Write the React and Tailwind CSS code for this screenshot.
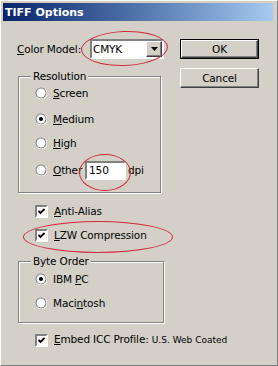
import React from 'react';

const raised =
  'border border-t-white border-l-white border-r-[#404040] border-b-[#404040] shadow-[inset_-1px_-1px_0_#808080]';
const sunken =
  'border-2 border-t-[#808080] border-l-[#808080] border-r-white border-b-white';

const Radio = ({ checked }) => (
  <svg width="12" height="12" viewBox="0 0 12 12" className="shrink-0">
    <circle cx="6" cy="6" r="5.5" fill="#808080" />
    <path d="M10.5 2.5 A5.5 5.5 0 0 1 2.5 10.5" fill="none" stroke="#ffffff" strokeWidth="1" />
    <circle cx="6" cy="6" r="4.5" fill="#ffffff" />
    {checked && <circle cx="6" cy="6" r="2" fill="#000000" />}
  </svg>
);

const Check = ({ checked }) => (
  <span className={`w-[13px] h-[13px] bg-white shrink-0 flex items-center justify-center ${sunken}`}>
    {checked && (
      <svg width="9" height="9" viewBox="0 0 9 9">
        <polyline points="1.5,4 3.5,6 7.5,2" fill="none" stroke="#000" strokeWidth="1.8" />
      </svg>
    )}
  </span>
);

const Option = ({ control, children, className = '' }) => (
  <div className={`h-[24px] flex items-center gap-[6px] ${className}`}>
    {control}
    <span>{children}</span>
  </div>
);

const Group = ({ title, className, children }) => (
  <div
    className={`relative border border-[#808080] shadow-[inset_1px_1px_0_#fff,1px_1px_0_#fff] ${className}`}
  >
    <span className="absolute left-[12px] top-[-7px] px-[2px] bg-[#d4d0c8] leading-[13px]">{title}</span>
    {children}
  </div>
);

export default function App() {
  return (
    <div className="relative w-[278px] h-[366px] overflow-hidden bg-[#d4d0c8] border border-t-white border-l-white border-r-[#808080] border-b-[#808080] text-[10.5px] tracking-[-0.15px] leading-[13px] text-black font-['DejaVu_Sans',sans-serif]">
      {/* title bar */}
      <div className="ml-[2px] mt-[2px] w-[270px] h-[18px] flex items-center pl-[2px] bg-gradient-to-r from-[#0a246a] to-[#a6caf0]">
        <span className="text-white font-bold text-[11px] tracking-normal">TIFF Options</span>
      </div>

      <div className="flex pl-[16px] mt-[18px]">
        {/* left column */}
        <div className="w-[147px] flex flex-col">
          <div className="h-[20px] flex items-center">
            <span className="w-[73px] whitespace-nowrap">
              <u>C</u>olor Model:
            </span>
            <div className={`w-[74px] h-[20px] bg-white flex items-center ${sunken}`}>
              <span className="flex-1 pl-[1px]">CMYK</span>
              <div className={`w-[16px] h-[16px] bg-[#d4d0c8] flex items-center justify-center ${raised}`}>
                <svg width="7" height="4" viewBox="0 0 7 4">
                  <polygon points="0,0 7,0 3.5,4" fill="#000" />
                </svg>
              </div>
            </div>
          </div>

          <Group title="Resolution" className="ml-[1px] mt-[17px] w-[143px] h-[117px] flex flex-col pl-[16px] pt-[4px]">
            <Option control={<Radio />}>
              <u>S</u>creen
            </Option>
            <Option control={<Radio checked />} className="mt-[2px]">
              <u>M</u>edium
            </Option>
            <Option control={<Radio />}>
              <u>H</u>igh
            </Option>
            <div className="h-[24px] mt-[3px] flex items-center gap-[6px]">
              <Radio />
              <span>
                <u>O</u>ther
              </span>
              <div className={`w-[41px] h-[19px] bg-white flex items-center pl-[2px] -ml-[3px] ${sunken}`}>150</div>
              <span className="-ml-[4px]">dpi</span>
            </div>
          </Group>

          <Option control={<Check checked />} className="ml-[18px] mt-[6px]">
            <u>A</u>nti-Alias
          </Option>
          <Option control={<Check checked />} className="ml-[18px] whitespace-nowrap">
            <u>L</u>ZW Compression
          </Option>

          <Group title="Byte Order" className="ml-[1px] mt-[14px] w-[146px] h-[62px] flex flex-col pl-[16px] pt-[5px]">
            <Option control={<Radio checked />}>
              IBM <u>P</u>C
            </Option>
            <Option control={<Radio />}>
              Maci<u>n</u>tosh
            </Option>
          </Group>

          <div className="h-[24px] ml-[18px] mt-[5px] flex items-center gap-[6px] whitespace-nowrap">
            <Check checked />
            <span>
              <u>E</u>mbed ICC Profile: <span className="text-[9px] tracking-normal">U.S. Web Coated</span>
            </span>
          </div>
        </div>

        {/* right column */}
        <div className="ml-[16px] w-[79px] flex flex-col">
          <button className="h-[20px] w-full border border-black bg-[#d4d0c8]">
            <span className={`block h-full w-full leading-[16px] ${raised}`}>OK</span>
          </button>
          <button className={`h-[20px] w-full mt-[9px] bg-[#d4d0c8] leading-[16px] ${raised}`}>Cancel</button>
        </div>
      </div>

      {/* red annotation ellipses */}
      <div className="absolute left-[80px] top-[30px] w-[87px] h-[35px] rounded-[50%] border border-[#d0283c] -rotate-2 pointer-events-none" />
      <div className="absolute left-[78px] top-[153px] w-[52px] h-[37px] rounded-[50%] border border-[#d0283c] pointer-events-none" />
      <div className="absolute left-[22px] top-[220px] w-[150px] h-[32px] rounded-[50%] border border-[#d0283c] pointer-events-none" />
    </div>
  );
}
